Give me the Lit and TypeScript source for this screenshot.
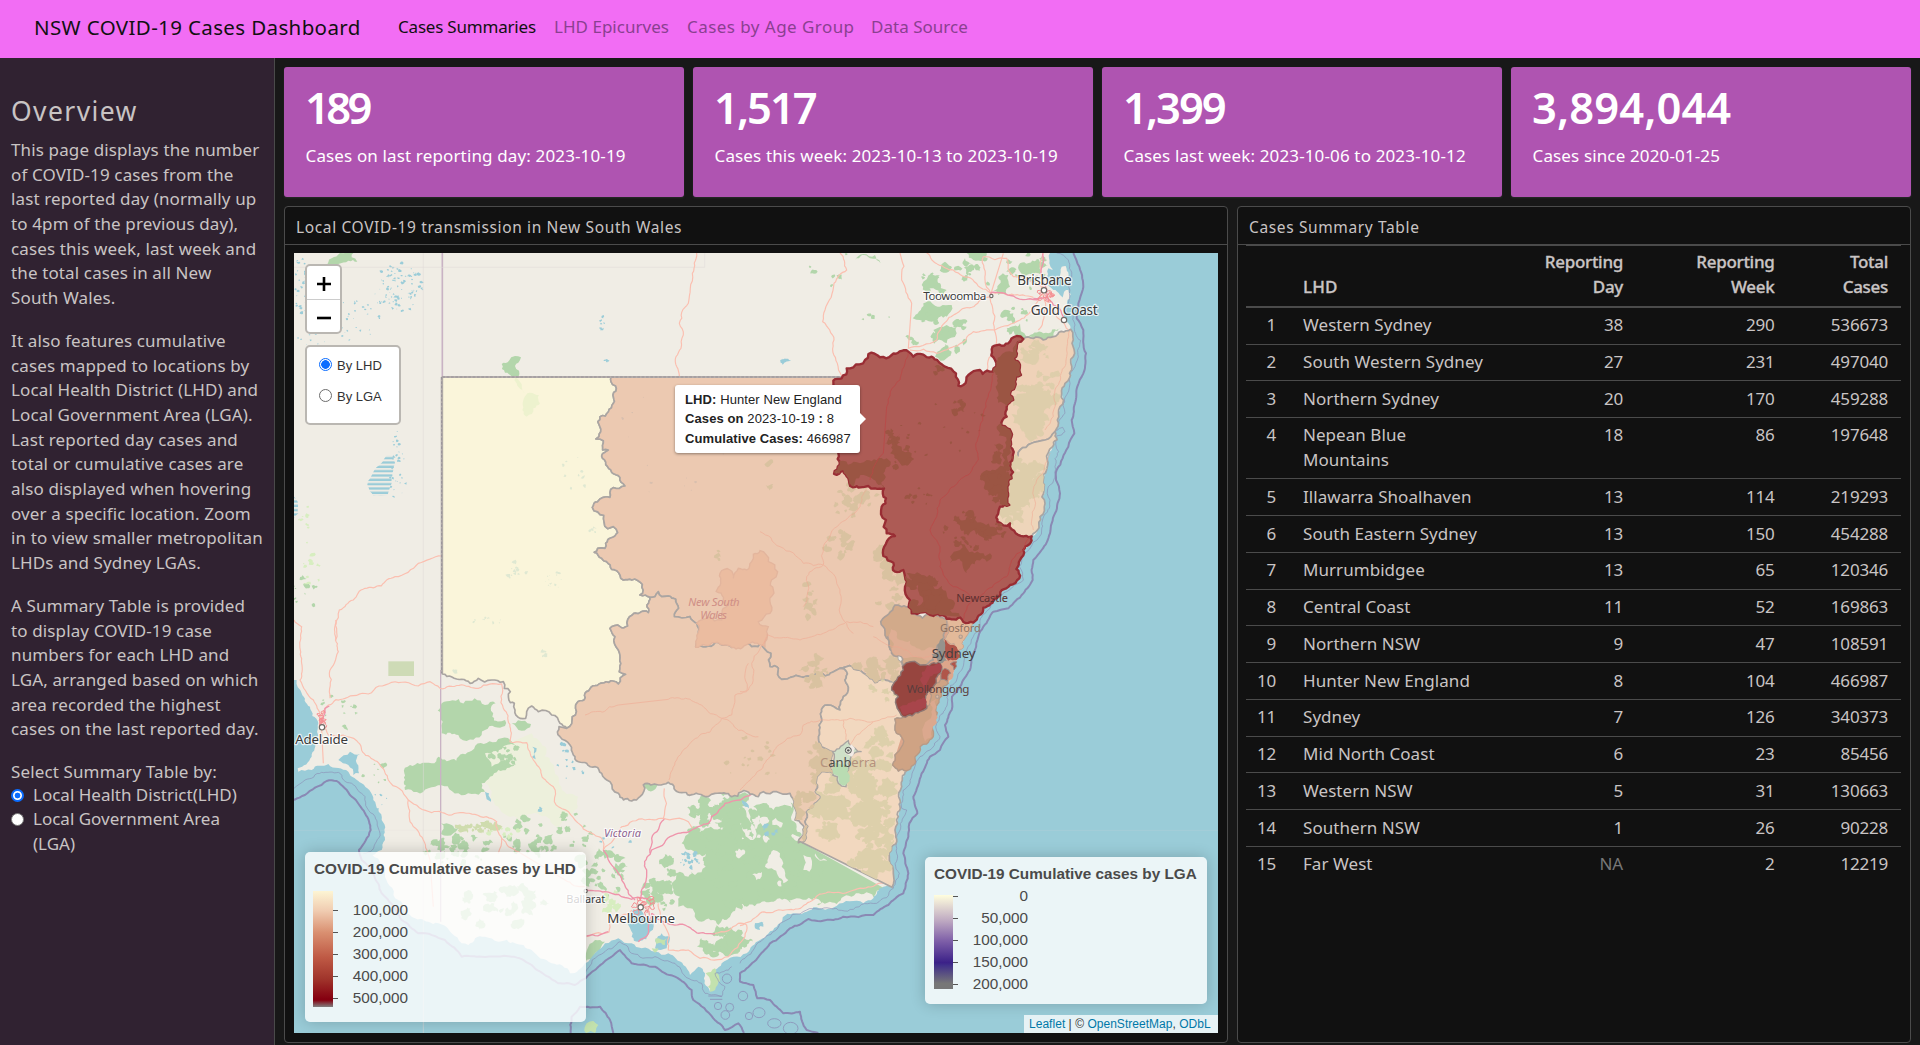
import { LitElement, html, svg, css } from "lit";
import { customElement, property } from "lit/decorators.js";

/* ---------- Map geometry helpers ---------- */
type Pt = [number, number];

const pts = (dx: number, dy: number, s: string): Pt[] =>
  s.trim().split(/\s+/).map((p) => {
    const [x, y] = p.split(",").map(Number);
    return [x + dx, y + dy] as Pt;
  });
// The map is drawn in four quadrants, each with its own origin.
const nw = (s: string) => pts(0, 0, s);
const ne = (s: string) => pts(1425, 0, s);
const sw = (s: string) => pts(0, 1140, s);
const se = (s: string) => pts(1365, 1140, s);

const noise = (a: number, b: number) => {
  const v = Math.sin(a * 12.9898 + b * 78.233) * 43758.5453;
  return v - Math.floor(v);
};

// Midpoint displacement; a border shared by two areas gets the same wiggle,
// and long survey lines stay straight.
function split(a: Pt, b: Pt, amp: number, min: number, out: Pt[]) {
  const len = Math.hypot(b[0] - a[0], b[1] - a[1]);
  if (len < min || len > 135) {
    out.push(b);
    return;
  }
  const flip = a[0] > b[0] || (a[0] === b[0] && a[1] > b[1]);
  const [p, q] = flip ? [b, a] : [a, b];
  const k = (noise(p[0] + q[0], p[1] + q[1]) - 0.5) * amp;
  const m: Pt = [(p[0] + q[0]) / 2 - (q[1] - p[1]) * k, (p[1] + q[1]) / 2 + (q[0] - p[0]) * k];
  split(a, m, amp, min, out);
  split(m, b, amp, min, out);
}
function path(points: Pt[], amp = 0.45, close = true, min = 12): string {
  const out: Pt[] = [points[0]];
  for (let i = 1; i < points.length; i++) split(points[i - 1], points[i], amp, min, out);
  if (close) split(points[points.length - 1], points[0], amp, min, out);
  return "M" + out.map((p) => p[0].toFixed(1) + " " + p[1].toFixed(1)).join("L") + (close ? "Z" : "");
}
const line = (p: Pt[], amp = 0.25) => path(p, amp, false);

// Scatter of small irregular blobs inside an ellipse.
function scatter(cx: number, cy: number, rx: number, ry: number, n: number, size: number, seed: number): string {
  let d = "";
  for (let i = 0; i < n; i++) {
    const t = noise(i, seed) * 6.283;
    const r = Math.sqrt(noise(seed, i + 7));
    const x = cx + Math.cos(t) * r * rx;
    const y = cy + Math.sin(t) * r * ry;
    const s = size * (0.3 + noise(i + 3, seed + 5));
    const p: Pt[] = [];
    for (let k = 0; k < 7; k++) {
      const q = s * (0.45 + noise(i + k, seed + k * 3));
      p.push([x + Math.cos(k * 0.9) * q, y + Math.sin(k * 0.9) * q * 0.85]);
    }
    d += path(p, 0.6, true, 8);
  }
  return d;
}

const northCoast = ne("932,268 936,310 940,350 935,390 915,430 905,460 900,500 892,540 885,575");
const midCoast = ne("885,575 878,620 862,660 850,720 852,750 855,790 840,830 815,889");
const hunterCoast = ne("815,889 790,930 780,960 778,1015 750,1035 710,1075 670,1103 640,1148");
const sydneyCoast = se("695,30 672,60 655,100 648,130 640,160 625,190 605,215 597,240 588,265 585,290 575,320 580,350 560,372 540,380 525,410 500,452");
const southCoast = se("500,452 485,500 480,540 475,590 465,630 455,680 448,720 460,760 456,802");
const bassCoast = [
  ...se("430,800 400,835 370,850 290,858 220,862 160,880 110,920 60,960 20,1000"),
  ...sw("1345,1010 1310,1030 1290,1050 1300,1090 1275,1115 1260,1060 1240,1040 1215,1065 1195,1035 1150,1000 1110,995 1070,985 1040,970 1000,955 960,970 930,1000 900,1030 855,1060 800,1030 740,990 690,970 640,965 600,950 570,955 550,975 530,970 500,940 460,910 430,905 380,890 340,840 300,770 262,705 290,690 300,660 290,600 265,540 230,490 190,455 130,432 80,450 40,455 38,445 80,410 95,360 100,310 75,260 50,220 35,180"),
];
const sea: Pt[] = [
  ...ne("870,39 868,70 880,90 862,110 880,140 900,165 915,190 910,220 925,250"),
  ...northCoast, ...midCoast, ...hunterCoast, ...sydneyCoast,
  ...southCoast, ...bassCoast,
];

const farWestEast: Pt[] = [
  ...nw("978,411 978,425 992,438 984,465 985,490 945,530 942,590 933,597 955,602 953,630 970,630 950,648 1020,738 985,743 975,758 975,772 955,772 922,802 968,866 985,860 998,878 962,910 960,925 938,925 928,937 950,955 965,965 980,988 995,992 1015,1020 1040,1020 1072,1033 1065,1065 1095,1072"),
];
const farWestSouth: Pt[] = [
  ...nw("1095,1072 1090,1118 1042,1125 1028,1158 1005,1160 975,1165"),
  ...sw("990,50 1000,90 1003,155 1022,163 1000,192 942,192 900,220 872,255 862,290 845,325"),
];
const farWest: Pt[] = [
  ...nw("472,411"), ...farWestEast, ...farWestSouth,
  ...sw("825,310 800,285 760,275 740,258 725,275 722,295 705,295 690,270 688,250 676,248 676,215 658,205 655,185 620,180 580,175 555,190 530,178 472,162"),
];
const westernSouth: Pt[] = [
  ...nw("1095,1072 1110,1070 1120,1055 1130,1070 1150,1068 1172,1078 1168,1130 1215,1130 1235,1150 1232,1220"),
  ...sw("1290,68 1340,82"),
  ...se("35,80 68,68 90,140 115,145 125,178 160,170 190,172 230,158 255,168 300,145"),
];
const southernTop = se("300,145 320,140 350,150 385,170 405,188 450,185 470,180");
const western: Pt[] = [
  ...farWestEast, ...westernSouth, ...southernTop,
  ...se("490,150 490,140 455,100 445,50"),
  ...ne("380,1190 450,1095 480,990 430,945 450,885 420,740 300,690 285,430 290,411"),
];
const murSouthern = se("300,145 320,155 315,180 325,210 300,270 262,255 245,275 238,330 245,380 278,395 278,460 245,455 228,490 242,535 222,560 195,605 200,635 188,668");
const murrumbidgee: Pt[] = [
  ...westernSouth, ...murSouthern,
  ...se("175,668 190,635 165,600 160,555 150,520 110,515 70,515 55,530 5,515"),
  ...sw("1340,530 1290,520 1270,530 1240,522 1190,518 1150,487 1120,495 1075,495 1065,530 1040,543 1000,520 975,485 950,460 905,430 865,405 855,375 825,350 822,320"),
  ...[...farWestSouth].reverse(),
];
const southern: Pt[] = [
  ...southernTop,
  ...se("455,210 475,230 472,265 490,290 465,297 470,340 488,375 465,405 458,435"),
  ...southCoast, ...[...murSouthern].reverse(),
];
const metro: Pt[] = [...se("600,20 620,0"), ...sydneyCoast, ...se("458,435 500,300 560,140")];
const illawarra = [...se("605,160 570,220 560,265 540,275 490,290 465,297 470,340 488,375 465,405 458,435"), ...[...sydneyCoast].reverse().slice(0, 11)];
const swSydney = se("515,125 550,135 575,130 600,125 605,155 580,200 555,240 560,265 540,275 490,290 472,265 475,230 455,210 470,180 490,150 487,140");
const nepean: Pt[] = [
  ...ne("450,1095 425,1100 405,1095 398,1110 375,1130 362,1145 375,1175 380,1195"),
  ...se("445,50 455,100 485,110 490,140 515,125 550,135 580,120 575,100 600,70 610,45 620,0"),
  ...ne("565,1140 520,1120 455,1120"),
];
const centralCoast: Pt[] = [...ne("565,1138 600,1132 615,1146 640,1148"), ...se("695,30 672,60 655,100 612,60 620,0")];
const northBorder = ne("932,268 880,290 850,300 790,297");
const hunterEastA = ne("790,297 770,325 762,355 780,375 783,405 768,410 765,440 750,465 760,480 740,530 725,557 742,565 750,620 758,655");
const hunterEastB = ne("758,655 750,680 755,715 742,740 748,795 720,800 712,845 750,850 755,868 815,889");
const coastSplit = ne("885,575 855,600 815,610 780,630 758,655");
const northern: Pt[] = [...northCoast, ...coastSplit, ...[...hunterEastA].reverse(), ...[...northBorder].reverse()];
const midNorth: Pt[] = [...midCoast, ...[...hunterEastB].reverse(), ...[...coastSplit].reverse()];
const hunter: Pt[] = [
  ...ne("220,422 245,415 260,385 325,342 395,345 445,335 460,350 515,350 555,380 588,400 595,437 610,435 625,405 660,390 668,402 698,395 705,360 695,328 745,310 770,288"),
  ...hunterEastA, ...hunterEastB, ...hunterCoast,
  ...ne("610,1146 600,1132 575,1138 520,1128 455,1120 450,1080 435,1040 435,1010 430,990 405,995 400,968 370,948 405,888 380,880 378,840 365,800 378,775 372,745 345,745 325,738 278,742 265,715 250,692 222,702 235,640 225,600"),
];

const forests: Pt[][] = [
  sw("470,250 600,255 632,250 618,272 622,290 660,300 660,318 600,330 590,345 520,345 470,340"),
  sw("358,460 375,435 405,432 440,430 460,410 560,392 690,375 650,388 600,400 620,440 660,420 690,432 640,450 615,470 590,490 600,515 560,522 520,520 450,500 430,505 360,510"),
  sw("468,610 500,615 520,625 505,640 468,642"),
  sw("680,310 720,302 738,312 710,332"),
  [...se("160,560 170,620 175,668 190,670 430,803 400,832 290,852 235,856 170,835 100,845 20,860 -20,850"),
   ...sw("1300,915 1250,905 1230,880 1180,860 1185,830 1160,790 1175,760 1210,770 1250,740 1265,700 1210,690 1190,670 1240,640 1320,620 1300,570 1330,540 1365,560 1380,640"),
   ...se("40,660 60,610 40,560 80,550 100,570")],
  sw("1300,960 1370,930 1380,960 1330,1010 1260,1000"),
  sw("900,1030 930,960 960,965 930,1000"),
  nw("118,76 140,55 165,39 205,39 200,52 217,65 190,62 160,72"),
  ne("485,135 515,100 540,105 535,130 560,150 550,165 500,155"),
  ne("458,235 490,190 540,200 575,195 560,230 515,245 480,240"),
  ne("520,270 560,255 590,280 560,310 530,300"), ne("525,350 545,325 575,335 560,355"),
  ne("620,39 680,39 670,62 640,60"), ne("780,70 830,60 850,110 790,120"),
  ne("715,110 745,105 750,140 715,165 700,150"), ne("730,210 760,220 765,250 740,240"),
  ne("285,60 310,42 345,45 362,70 330,55"), ne("740,265 780,250 800,290 850,280 905,265 880,290 850,300 790,297"),
  sw("1055,510 1110,495 1140,488 1090,512"),
];
const lakes: Pt[][] = [
  sw("160,420 195,395 225,402 215,430 222,460 205,465 190,435"),
  sw("1030,915 1045,868 1075,880 1085,905 1105,900 1095,935 1060,965 1040,950"),
  sw("1110,960 1130,940 1155,950 1145,985 1110,985"),
  sw("742,380 755,385 752,418 740,412"), sw("600,515 612,520 618,545 605,538"),
  sw("1370,540 1385,548 1392,565 1380,560"), sw("1410,910 1435,905 1425,930 1410,925"),
  ne("865,85 905,95 910,150 880,150 858,120"),
  se("45,910 65,905 70,920 48,925"),
];

const roads: Pt[][] = [
  nw("1235,39 1222,100 1210,190 1183,250 1195,285 1188,325 1173,350 1183,408"),
  nw("152,1200 163,1110 205,1080 240,1045 330,1010 400,970 470,948 550,922 640,900 760,865 820,855 845,888 960,882 985,855 1060,862 1200,848 1400,858 1500,920"),
  sw("152,0 160,95 133,160 135,235"), sw("27,0 50,20 50,130 45,180 85,240 108,290 115,430"),
  sw("110,310 130,255 180,235 250,222 320,187 400,198 435,185 465,205 580,205 650,192 655,265 675,365 725,368 745,420 805,500 808,545 870,600 950,655 955,690"),
  sw("110,315 130,345 215,362 285,435 310,480 370,540 440,578 500,585 570,583 635,605 650,655 700,695 840,780 900,800"),
  sw("370,540 375,605 415,660 435,720 445,860"), sw("650,655 640,700"),
  sw("1138,505 1135,595 1080,600 1010,620 955,690"), sw("1135,595 1210,605 1222,625"),
  sw("905,950 940,938 972,936 975,905 1040,870"), sw("1120,850 1150,940 1150,990 1210,990 1245,1015 1330,1010 1380,950 1385,915 1360,910 1290,940"),
  se("0,917 60,880 160,870 210,845 300,818 370,805 430,790"),
  ne("240,39 260,90 222,130 195,210 188,245 222,300 232,370 245,408"),
  ne("420,39 425,120 455,190 445,325"), ne("500,39 580,90 690,158 820,172"),
  ne("445,325 530,300 590,220 690,170 730,40"), ne("450,330 530,340 640,275 705,270 780,240 850,160"),
  ne("690,165 700,250 705,330 680,400"), ne("850,39 850,170 835,270"), ne("670,50 740,55 760,110 850,140"),
  ne("850,170 880,210 915,255 925,270"), ne("670,50 675,120 692,160"),
];
const motorways: Pt[][] = [
  sw("1440,480 1365,540 1320,550 1280,590 1270,610 1220,630 1100,690 1080,790 1065,840"),
  sw("1138,598 1100,655 1095,700"), sw("955,690 1000,760 1050,840"), sw("905,810 960,815 1040,838 1090,838"),
  sw("1100,880 1140,908 1200,915 1290,942"), sw("1060,965 1090,940 1100,880"), sw("905,948 970,935"),
  ne("820,175 860,170 880,195 915,240"), ne("848,40 848,120 860,180"), sw("108,310 115,290 120,265 133,258"),
  ne("690,160 760,168 840,175"),
];
const innerRoads: Pt[][] = [
  sw("900,285 1000,255 1150,238 1250,255 1310,295 1420,350"), sw("1390,130 1385,215 1350,225 1340,285 1310,295 1225,360 1175,420 1152,480"),
  se("0,215 25,210 35,130 80,50"), se("0,510 40,470 80,420 110,380 180,345 190,315 240,300 310,300 330,295 400,305 470,285"),
  se("330,375 370,330 400,305"), se("400,50 470,80 520,110 580,105"), se("80,45 180,60 250,40 320,5 400,20"), se("310,300 318,360"),
  ne("0,875 60,920 130,970 190,975 235,1040 240,1120 280,1180"), ne("190,975 190,920 240,850 300,800 320,745"), ne("190,975 140,1010 130,1100"),
  ne("930,270 920,350 885,450 880,530 855,570"), ne("870,640 830,720 825,800 820,870"),
];
const hunterRoads: Pt[][] = [
  ne("445,340 420,420 380,500 370,640 330,720"), ne("700,400 680,480 660,560 655,660 580,740 540,780 530,830 510,870 540,920 540,980 580,1040 640,1080"),
  ne("810,890 755,960 740,1010 680,1050 640,1080 610,1140"),
];
const boundary12: Pt[][] = [
  [...ne("940,39 958,80 968,150 955,190 950,235 970,270 978,340 970,400 952,440 945,490 935,540 943,580 925,620 890,690 888,720 900,760 885,820 870,880 845,930 820,960 818,1020 790,1060 745,1105 700,1115 670,1160"),
   ...se("715,50 705,90 690,150 660,200 636,230 635,270 615,315 625,350 600,390 570,410 545,460 520,530 532,580 508,610 505,650 490,700 505,760 490,820 445,855 400,885 310,890 280,900 205,897 150,925 90,970 0,1060 0,1085 40,1095 52,1135 90,1140 130,1180 180,1175 200,1230 235,1239")],
  sw("27,540 60,525 125,483 155,483 200,530 240,580 257,630 222,690 230,720 290,820 350,900 400,940 480,960 530,1010 590,1010 680,1010 740,1035 820,1090 870,1095 930,1050 1005,990 1040,1030 1110,1040 1170,1070 1220,1110 1225,1140 1285,1195 1320,1230 1360,1210 1377,1239"),
  sw("857,1239 860,1190 885,1160 945,1160 975,1200 985,1239"),
];
const boundary3: Pt[][] = [
  [...ne("890,39 925,60 935,110 925,190 945,255 955,350 930,430 915,520 890,572 908,562 915,575 905,585 885,590 885,680 865,740 870,780 845,870 790,940 790,1020 740,1055 690,1105 660,1150"),
   ...se("700,50 680,90 665,150 650,180 625,220 615,270 590,310 600,350 570,390 540,410 515,470 490,510 485,565 500,570 495,585 475,640 470,700 478,760 460,805 410,850 340,868 270,865 200,870 120,910 40,990 0,1030")],
  sw("27,505 60,480 110,457 160,457 200,490 240,530 270,590 285,640 262,690 235,700"),
  sw("900,1060 960,995 1005,965 1040,1000 1110,1010 1170,1030 1220,1080 1250,1090 1260,1120 1310,1130 1320,1100 1290,1060 1340,1040"),
];

const places: { x: number; y: number; w: number; size: number; name: string; dot?: Pt; r?: number; fill?: string; halo?: boolean }[] = [
  { name: "Brisbane", x: 2197, y: 135, w: 163, size: 41, dot: [2277, 151], r: 8 },
  { name: "Toowoomba", x: 1915, y: 180, w: 189, size: 35, dot: [2119, 168], r: 5 },
  { name: "Gold Coast", x: 2237, y: 226, w: 201, size: 41, dot: [2337, 240], r: 8 },
  { name: "Newcastle", x: 2014, y: 1087, w: 155, size: 33, fill: "#5c3030", halo: false },
  { name: "Gosford", x: 1965, y: 1177, w: 122, size: 33, fill: "#8d7161", halo: false, dot: [2027, 1190], r: 5 },
  { name: "Sydney", x: 1940, y: 1254, w: 132, size: 40, fill: "#474040", halo: false },
  { name: "Wollongong", x: 1865, y: 1358, w: 188, size: 35, fill: "#5b3d3d", halo: false, dot: [1957, 1370], r: 5 },
  { name: "Adelaide", x: 31, y: 1511, w: 158, size: 40, dot: [111, 1462], r: 8 },
  { name: "Melbourne", x: 967, y: 2048, w: 203, size: 40, dot: [1067, 2002], r: 8 },
  { name: "Ballarat", x: 844, y: 1990, w: 117, size: 33, dot: [902, 1953], r: 5 },
];

@customElement("nsw-map")
class NswMap extends LitElement {
  static styles = css`
    :host { display: block; position: relative; height: 780px; overflow: hidden; font-family: "Liberation Sans", Arial, sans-serif; color: #333; }
    .canvas { display: block; width: 100%; height: 100%; }
    .label { font-family: "Noto Sans", sans-serif; }
    .halo { paint-order: stroke; stroke: #fff; stroke-opacity: 0.75; stroke-width: 7px; stroke-linejoin: round; }
    .italic { font-style: italic; }
    .control { position: absolute; left: 11px; box-sizing: border-box; border: 2px solid #bab7b2; border-radius: 5px; background: #fff; }
    .zoom { top: 11px; width: 37px; height: 70px; display: flex; flex-direction: column; }
    .btn { flex: 1; display: flex; align-items: center; justify-content: center; padding-top: 4px; }
    .btn + .btn { border-top: 1px solid #ccc; }
    .layers { top: 92px; width: 96px; height: 80px; padding: 9px 12px; display: flex; flex-direction: column; gap: 12px; }
    .choice { display: flex; align-items: center; gap: 5px; font-size: 13px; line-height: 19px; height: 19px; white-space: nowrap; }
    .choice input { appearance: none; box-sizing: border-box; width: 13px; height: 13px; margin: 0 0 3px; border: 1px solid #6c6c6c; border-radius: 50%; background: #fff; }
    .choice input:checked { border-color: #0a6cff; background: radial-gradient(circle, #0a6cff 0 4px, #fff 4.6px); }
    .tooltip { position: absolute; left: 381px; top: 132px; width: 185px; height: 68px; box-sizing: border-box; padding: 4.5px 0 0 10px; background: #fff; border-radius: 3px; box-shadow: 0 1px 3px rgba(0, 0, 0, 0.4); font-size: 13px; line-height: 19.5px; letter-spacing: 0.1px; color: #222; white-space: nowrap; }
    .tooltip::after { content: ""; position: absolute; left: 185px; top: 28px; border: 6px solid transparent; border-left-color: #fff; border-right: 0; }
    .legend { position: absolute; box-sizing: border-box; border-radius: 5px; background: rgba(255, 255, 255, 0.8); box-shadow: 0 0 15px rgba(0, 0, 0, 0.2); color: #4a4a4a; padding: 7px 8px; }
    .lhd { left: 11px; top: 599px; width: 281px; height: 170px; }
    .lga { left: 631px; top: 604px; width: 282px; height: 147px; padding-left: 9px; }
    .legend-title { font-weight: 700; font-size: 15.3px; line-height: 20px; white-space: nowrap; padding-left: 1px; }
    .lga .legend-title { padding-left: 0; }
    .scale { display: flex; }
    .lhd .scale { margin-top: 12px; }
    .lga .scale { margin-top: 4px; }
    .bar { width: 20px; height: 116px; background: linear-gradient(#fdf5d4, #f0ccb1 17%, #d98f70 36%, #bf5a45 57%, #a0342b 76%, #850010 93%, #850010 94%, #808080 100%); }
    .lga .bar { width: 19px; height: 94px; margin-top: 7px; background: linear-gradient(#fffede, #bfaac2 27%, #7e5fa8 49%, #3b2188 72%, #41308a 75%, #777 94%, #777); }
    .ticks { display: flex; flex-direction: column; }
    .tick { display: flex; align-items: center; height: 22px; font-size: 15.3px; }
    .lhd .ticks { padding-top: 8px; }
    .lga .ticks { margin-top: -3px; }
    .dash { width: 5px; height: 1px; background: #555; }
    .num { width: 70px; text-align: right; }
    .attribution { position: absolute; right: 0; bottom: 0; width: 194px; height: 18px; box-sizing: border-box; padding-left: 5px; background: rgba(255, 255, 255, 0.75); font-size: 12px; line-height: 18px; white-space: nowrap; color: #333; letter-spacing: 0.03px; }
    .attribution a { color: #0078a8; }
  `;

  private area(p: Pt[], fill: string, stroke = "#aaa5a2", width = 5) {
    return svg`<path d=${path(p)} fill=${fill} stroke=${stroke} stroke-width=${width} stroke-linejoin="round"></path>`;
  }

  private renderMap() {
    return svg`
      <defs>
        <clipPath id="hunter-clip"><path d=${path(hunter)}></path></clipPath>
        <clipPath id="mid-clip"><path d=${path(midNorth)}></path><path d=${path(northern)}></path></clipPath>
        <clipPath id="south-clip"><path d=${path(southern)}></path></clipPath>
        <clipPath id="west-clip"><path d=${path(western)}></path><path d=${path(murrumbidgee)}></path></clipPath>
        <pattern id="ephemeral" width="14" height="13" patternUnits="userSpaceOnUse"><rect y="1" width="14" height="7" fill="#9accd8"></rect></pattern>
      </defs>
      <rect x="27" y="39" width="2772" height="2340" fill="#f0ede5"></rect>

      <path d=${path(sw("600,400 740,340 800,430 880,530 820,620 700,600 640,560 600,490"))} fill="#edf0dc"></path>
      <rect x="310" y="1264" width="77" height="44" fill="#cedbb6"></rect>
      <path d=${scatter(575, 1762, 60, 14, 24, 11, 71)} fill="#cfdcae"></path>
      ${forests.map((f) => svg`<path d=${path(f, 0.55)} fill="#b3d6ab"></path>`)}
      <path d=${scatter(660, 1545, 40, 40, 20, 10, 3) + scatter(520, 1830, 100, 45, 30, 14, 9) + scatter(740, 1790, 90, 60, 28, 12, 13) + scatter(870, 1770, 50, 60, 16, 12, 15) + scatter(950, 1900, 70, 80, 30, 14, 4) + scatter(1130, 1940, 50, 80, 22, 16, 22) + scatter(1320, 1750, 100, 90, 60, 18, 31) + scatter(1320, 2110, 70, 40, 18, 16, 6) + scatter(1430, 1900, 170, 120, 60, 22, 8) + scatter(160, 1420, 60, 60, 12, 8, 17) + scatter(270, 1600, 40, 40, 9, 8, 19) + scatter(60, 1065, 40, 60, 10, 7, 21) + scatter(650, 2000, 130, 60, 20, 20, 23)} fill="#b3d6ab"></path>
      <path d=${scatter(1960, 270, 90, 80, 20, 11, 41) + scatter(2090, 90, 120, 45, 14, 12, 42) + scatter(2230, 90, 50, 60, 12, 12, 43) + scatter(1950, 120, 40, 40, 8, 8, 44) + scatter(1660, 90, 100, 50, 6, 8, 45) + scatter(1770, 230, 50, 12, 5, 10, 47) + scatter(2190, 240, 60, 40, 8, 12, 48)} fill="#b3d6ab"></path>
      <path d=${scatter(1480, 1830, 120, 110, 10, 12, 51) + path(se("5,560 20,590 40,660 30,600 22,560")) + path(se("85,520 150,530 155,565 110,560 80,545")) + path(se("100,690 120,700 125,740 145,780 130,790 95,745 75,740")) + path(se("190,705 212,712 208,755 190,750")) + path(se("225,700 262,722 240,722")) + path(se("0,870 60,850 160,860 220,835 245,850 210,862 120,880 40,930 0,930")) + path(sw("1205,700 1240,710 1262,740 1230,765 1205,745"))} fill="#f0ede5"></path>
      <path d=${scatter(80, 1000, 30, 60, 12, 6, 61) + scatter(60, 860, 20, 70, 10, 6, 62) + scatter(660, 1780, 60, 14, 8, 8, 63) + scatter(980, 1985, 30, 30, 8, 12, 64)} fill="#d7eec0"></path>

      <path d=${path([...sea, [27, 1320], [27, 2379], [2799, 2379], [2799, 39]], 0.35)} fill="#9accd8"></path>
      ${lakes.map((l) => svg`<path d=${path(l)} fill="#9accd8"></path>`)}
      <path d=${scatter(340, 140, 75, 75, 90, 4, 81) + scatter(230, 230, 90, 60, 26, 3, 82) + scatter(50, 140, 22, 100, 30, 4, 83) + scatter(110, 300, 90, 30, 14, 3, 84) + scatter(340, 700, 25, 90, 24, 3.5, 85) + scatter(335, 620, 12, 50, 12, 4, 86) + scatter(955, 245, 12, 24, 8, 4, 87) + scatter(1215, 1860, 30, 25, 20, 6, 90) + scatter(860, 1560, 50, 60, 16, 5, 89) + scatter(240, 1690, 70, 40, 6, 5, 91) + scatter(1455, 1770, 20, 20, 6, 8, 92) + scatter(1000, 1800, 60, 30, 6, 5, 93) + scatter(960, 362, 10, 6, 4, 6, 94) + scatter(768, 1710, 6, 8, 3, 7, 95) + scatter(1500, 360, 8, 6, 3, 8, 96)} fill="#9accd8"></path>
      <path d=${path(nw("305,646 325,648 330,668 322,700 320,730 308,765 265,768 247,735 258,710 272,685"), 0.2)} fill="url(#ephemeral)"></path>
      <path d=${path(nw("27,770 38,785 40,820 27,835"), 0.2)} fill="url(#ephemeral)"></path>
      <path d=${path(nw("650,372 672,362 690,348 708,352 700,368 690,378 700,411 682,411 660,398"))} fill="#b3d6ab"></path>
      <path d=${path(ne("905,80 917,78 912,130 905,115")) + path(ne("918,150 925,150 918,200 905,205"))} fill="#f0ede5"></path>
      <path d=${path(sw("1262,1060 1290,1045 1298,1095 1275,1115")) + path(sw("905,1210 925,1203 940,1215 930,1239 903,1239")) + path(sw("1100,985 1120,985 1110,998")) + path(sw("1112,955 1145,955 1140,975 1115,972"))} fill="#c3e2ae"></path>

      <g fill="none" stroke="#c9b3c4">
        <path d="M472 39V411" stroke-width="5"></path>
        <path d="M467 1290V2045" stroke-width="4"></path>
      </g>
      <g fill="none" stroke="#dedbd9" stroke-width="2">
        <path d="M415 39V2379M1259 39V82M27 82H1259" opacity="0.8"></path>
        <path d="M27 1771H470M1850 1771H2799" opacity="0.25"></path>
      </g>
      <g fill="none" stroke="#fbbfb0" stroke-width="3.5">${roads.map((r) => svg`<path d=${line(r)}></path>`)}</g>
      <g fill="none" stroke="#ef94ab" stroke-width="4">${motorways.map((r) => svg`<path d=${line(r)}></path>`)}</g>
      <path d=${scatter(1075, 1995, 35, 28, 14, 9, 101) + scatter(108, 1440, 12, 28, 8, 8, 102) + scatter(2285, 170, 30, 22, 10, 7, 103)} fill="none" stroke="#f58f92" stroke-width="3"></path>

      <g fill="none" stroke="#8a89b4" stroke-linejoin="round">
        ${boundary12.map((b) => svg`<path d=${line(b, 0.15)} stroke-width="6"></path>`)}
        ${boundary3.map((b) => svg`<path d=${line(b, 0.3)} stroke-width="2.5" opacity="0.7"></path>`)}
        <g stroke-width="3" opacity="0.7">
          <circle cx="1326" cy="2216" r="14"></circle><circle cx="1374" cy="2268" r="14"></circle><circle cx="1299" cy="2298" r="11"></circle>
          <circle cx="1334" cy="2302" r="12"></circle><circle cx="1321" cy="2325" r="13"></circle><circle cx="1392" cy="2328" r="11"></circle>
          <ellipse cx="1422" cy="2318" rx="18" ry="15"></ellipse><ellipse cx="1468" cy="2350" rx="20" ry="14"></ellipse>
          <ellipse cx="1517" cy="2365" rx="22" ry="18"></ellipse><path d="M1270 2268H1310M1275 2278H1312"></path>
        </g>
      </g>

      ${this.area(farWest, "#faf5da")}
      ${this.area(western, "#ecc9b1")}
      ${this.area(murrumbidgee, "#eccbb3")}
      ${this.area(southern, "#f2d8bf")}
      <g clip-path="url(#west-clip)">
        <path d=${path(nw("1305,1000 1335,990 1345,1015 1360,985 1385,990 1400,965 1425,932 1450,965 1478,995 1465,1050 1455,1120 1420,1145 1450,1160 1440,1220 1340,1222 1290,1208 1232,1222 1235,1150 1310,1140 1325,1100"))} fill="#ebbca0" stroke="#e3b59d" stroke-width="4"></path>
        <path d=${scatter(1710, 780, 70, 60, 22, 16, 111) + scatter(1660, 920, 40, 50, 12, 14, 112) + scatter(1455, 700, 8, 50, 6, 9, 113) + scatter(1825, 970, 50, 60, 26, 20, 114) + scatter(1810, 1080, 40, 50, 14, 12, 118) + scatter(1575, 1080, 16, 60, 10, 10, 115) + scatter(1590, 1290, 40, 50, 20, 14, 116) + scatter(1610, 1570, 45, 60, 34, 20, 117) + scatter(1560, 1720, 40, 70, 26, 16, 119) + scatter(1400, 1560, 90, 90, 18, 7, 120) + scatter(1300, 945, 14, 18, 5, 8, 121) + scatter(1790, 1290, 80, 40, 24, 18, 122)} fill="#d9c2a0"></path>
        <path d=${scatter(1150, 600, 170, 180, 16, 4, 123)} fill="#d8bfae"></path>
      </g>
      <g clip-path="url(#south-clip)">
        <path d=${scatter(1700, 1660, 70, 90, 36, 22, 131) + scatter(1775, 1740, 50, 200, 50, 22, 132) + scatter(1620, 1720, 50, 60, 22, 22, 133) + scatter(1760, 1890, 60, 60, 24, 22, 134) + scatter(1800, 1350, 40, 60, 12, 12, 135) + scatter(1780, 1520, 40, 60, 16, 14, 136)} fill="#ddd0ab"></path>
      </g>
      <path d=${path(nw("690,411 705,425 720,460 712,450 695,430")) + path(nw("715,480 735,458 762,465 765,490 745,505 725,530 712,510"))} fill="#edf2ce"></path>
      <path d=${scatter(870, 700, 40, 60, 10, 5, 141) + scatter(690, 990, 40, 25, 14, 6, 142) + scatter(810, 1020, 30, 25, 14, 4, 143) + scatter(610, 1140, 50, 15, 10, 4, 144) + scatter(780, 1240, 12, 10, 5, 6, 145) + scatter(510, 1290, 12, 6, 3, 8, 146) + scatter(925, 870, 14, 8, 5, 5, 147)} fill="#dfe8d2"></path>
      <path d="M470 411V1300M472 411H1665" fill="none" stroke="#b5aeab" stroke-width="6"></path>
      <path d="M470 411V1300M472 411H1665" fill="none" stroke="#97929a" stroke-width="3" stroke-dasharray="8 5"></path>
      <path d=${path(se("278,395 325,362 345,385 365,395 340,402 325,430 322,480 318,500 295,490 292,470 278,465"))} fill="#cfe0c8" stroke="#a9a5a2" stroke-width="4"></path>
      <path d=${path(se("330,365 345,385 335,410 315,400"))} fill="#f2ebe6"></path>
      <path d=${path(se("282,430 322,440 318,495 297,487 294,468 280,462"))} fill="#b9dcb2"></path>
      ${this.area(northern, "#efd2b8")}
      ${this.area(midNorth, "#eed5ba")}
      <g clip-path="url(#mid-clip)" fill="#deceab">
        <path d=${scatter(2245, 500, 45, 90, 40, 24, 151) + scatter(2250, 340, 40, 30, 16, 16, 152) + scatter(2215, 720, 60, 70, 60, 22, 153) + scatter(2290, 440, 40, 50, 12, 14, 154) + scatter(2180, 810, 30, 40, 16, 16, 155)}></path>
      </g>
      <path d=${path(metro)} fill="#dda68b"></path>
      ${this.area(illawarra, "#cfa384", "#b79a86", 4)}
      <path d=${path(se("590,230 590,260 578,320 575,350 555,365 548,340 565,300 570,250"))} fill="#dba88e"></path>
      ${this.area(nepean, "#d2aa8a", "#ab9f98", 5)}
      <path d=${path(se("445,50 460,100 490,115 575,118 590,90 530,85 480,60 450,20"))} fill="#dfae94"></path>
      ${this.area(centralCoast, "#e3b999", "#c2a796", 3)}
      ${this.area(swSydney, "#97453f", "#8f7672", 4)}
      <path d=${path(se("560,135 600,130 602,155 560,225 545,215 540,180"))} fill="#a8454b"></path>
      <path d=${path(se("478,262 500,255 550,232 558,262 540,272 490,285"))} fill="#a8454b"></path>
      <path d=${path(se("612,56 640,75 657,92 650,120 625,122 612,110"))} fill="#b0564a"></path>
      <path d=${path(se("610,45 616,75 614,110 628,125 600,130 590,115 575,103 595,92 600,60"))} fill="#95938d"></path>
      <path d=${path(se("603,160 615,145 632,160 622,183 603,178")) + path(se("630,132 650,125 642,150"))} fill="#b0564a" stroke="#a08c86" stroke-width="3"></path>
      <g fill="none" stroke="#f2a58f" stroke-width="3" opacity="0.5">${innerRoads.map((r) => svg`<path d=${line(r)}></path>`)}</g>

      ${this.area(hunter, "#ad5b55", "#992d34", 7)}
      <g clip-path="url(#hunter-clip)" fill="#9b5543">
        <path d=${path(ne("440,1000 500,1010 520,1040 560,1060 570,1110 600,1130 455,1118"), 0.7)}></path>
        <path d=${path(ne("700,365 720,350 780,300 790,400 770,460 750,530 760,620 760,720 750,795 720,780 690,760 665,720 680,690 735,660 740,600 710,560 730,490 720,400 698,395"), 0.7)}></path>
        <path d=${path(ne("230,660 300,670 320,660 380,655 370,700 372,745 280,740 250,690 222,700"), 0.7)}></path>
        <path d=${path(ne("395,590 420,580 425,620 455,640 450,670 420,670 390,640"), 0.7)}></path>
        <path d=${path(ne("570,950 600,930 620,905 660,940 690,940 680,965 650,960 620,1000 570,970"), 0.8)}></path>
        <path d=${path(ne("590,850 620,830 670,850 700,860 740,875 730,895 690,890 650,870"), 0.8)}></path>
        <path d=${scatter(2060, 870, 90, 60, 20, 10, 161) + scatter(1840, 620, 40, 70, 16, 9, 162) + scatter(2140, 690, 60, 90, 20, 13, 163) + scatter(1960, 375, 30, 25, 8, 12, 164) + scatter(2020, 500, 16, 20, 5, 10, 165) + scatter(1900, 770, 40, 30, 10, 8, 166) + scatter(1900, 1060, 70, 60, 18, 18, 167) + scatter(2000, 600, 130, 120, 14, 5, 168)}></path>
      </g>
      <g fill="none" stroke="#bd4646" stroke-width="3" opacity="0.7">${hunterRoads.map((r) => svg`<path d=${line(r)}></path>`)}</g>

      ${places.map((p) => svg`
        ${p.dot ? svg`<circle cx=${p.dot[0]} cy=${p.dot[1]} r=${p.r} fill=${p.fill ? "#dcb9a4" : "#fff"} stroke=${p.fill ? "#b09c8e" : "#6f6a66"} stroke-width="3.5"></circle>` : null}
        <text class=${"label" + (p.halo === false ? "" : " halo")} x=${p.x} y=${p.y} font-size=${p.size} textLength=${p.w} fill=${p.fill ?? "#3b3b3b"}>${p.name}</text>`)}
      <circle cx="1690" cy="1531" r="9" fill="#dfe5da" stroke="#555" stroke-width="3"></circle>
      <circle cx="1690" cy="1531" r="3.5" fill="#555"></circle>
      <text class="label" x="1605" y="1581" font-size="39" textLength="169" fill="#b4927d">C<tspan fill="#4f504b">anb</tspan>erra</text>
      <text class="label italic" x="1210" y="1098" font-size="34" textLength="154" fill="#cf8f86">New South</text>
      <text class="label italic" x="1246" y="1138" font-size="34" textLength="80" fill="#cf8f86">Wales</text>
      <text class="label italic halo" x="957" y="1790" font-size="33" textLength="111" fill="#8c6391">Victoria</text>
    `;
  }

  private legend(kind: string, title: string, values: string[]) {
    return html`<div class="legend ${kind}">
      <div class="legend-title">${title}</div>
      <div class="scale">
        <div class="bar"></div>
        <div class="ticks">${values.map((v) => html`<div class="tick"><span class="dash"></span><span class="num">${v}</span></div>`)}</div>
      </div>
    </div>`;
  }

  render() {
    return html`
      <svg class="canvas" viewBox="27 39 2772 2340" preserveAspectRatio="none">${this.renderMap()}</svg>
      <div class="control zoom">
        <div class="btn"><svg width="14" height="14" viewBox="0 0 14 14"><path d="M7 0V14M0 7H14" stroke="#000" stroke-width="2.6"></path></svg></div>
        <div class="btn"><svg width="14" height="14" viewBox="0 0 14 14"><path d="M0 7H14" stroke="#000" stroke-width="2.6"></path></svg></div>
      </div>
      <div class="control layers">
        <label class="choice"><input type="radio" name="layer" checked />By LHD</label>
        <label class="choice"><input type="radio" name="layer" />By LGA</label>
      </div>
      <div class="tooltip">
        <div><b>LHD:</b> Hunter New England</div>
        <div><b>Cases on</b> 2023-10-19 <b>:</b> 8</div>
        <div><b>Cumulative Cases:</b> 466987</div>
      </div>
      ${this.legend("lhd", "COVID-19 Cumulative cases by LHD", ["100,000", "200,000", "300,000", "400,000", "500,000"])}
      ${this.legend("lga", "COVID-19 Cumulative cases by LGA", ["0", "50,000", "100,000", "150,000", "200,000"])}
      <div class="attribution"><a>Leaflet</a> | © <a>OpenStreetMap</a>, <a>ODbL</a></div>
    `;
  }
}

@customElement("value-box")
class ValueBox extends LitElement {
  @property() value = "";
  @property() caption = "";
  static styles = css`
    :host { display: block; box-sizing: border-box; height: 130px; padding: 15px 21px; background: #af54b1; border-radius: 3px; color: #fff; box-shadow: 0 1px 2px #2b2b2b; }
    .value { font-weight: 600; font-size: 43.5px; line-height: 50px; letter-spacing: 0.1px; }
    .value.short { letter-spacing: -3.6px; }
    .value.four { letter-spacing: -2px; }
    .caption { margin-top: 10.5px; padding-left: 0.5px; font-size: 17px; line-height: 25px; letter-spacing: 0.14px; white-space: nowrap; }
  `;
  render() {
    const cls = this.value.length < 4 ? "short" : this.value.length < 6 ? "four" : "";
    return html`<div class="value ${cls}">${this.value}</div><div class="caption">${this.caption}</div>`;
  }
}

const rows: [string, string, string, string][] = [
  ["Western Sydney", "38", "290", "536673"],
  ["South Western Sydney", "27", "231", "497040"],
  ["Northern Sydney", "20", "170", "459288"],
  ["Nepean Blue Mountains", "18", "86", "197648"],
  ["Illawarra Shoalhaven", "13", "114", "219293"],
  ["South Eastern Sydney", "13", "150", "454288"],
  ["Murrumbidgee", "13", "65", "120346"],
  ["Central Coast", "11", "52", "169863"],
  ["Northern NSW", "9", "47", "108591"],
  ["Hunter New England", "8", "104", "466987"],
  ["Sydney", "7", "126", "340373"],
  ["Mid North Coast", "6", "23", "85456"],
  ["Western NSW", "5", "31", "130663"],
  ["Southern NSW", "1", "26", "90228"],
  ["Far West", "NA", "2", "12219"],
];

@customElement("app-root")
class AppRoot extends LitElement {
  static styles = css`
    :host { display: flex; flex-direction: column; height: 1045px; overflow: hidden; background: #181818; color: #c9c4c4; font-family: "Noto Sans", sans-serif; font-size: 17px; }
    .top { flex: none; display: flex; align-items: center; height: 58px; box-sizing: border-box; padding: 0 0 5px 34px; background: #f26df4; color: #111; white-space: nowrap; }
    .brand { font-size: 20.5px; width: 364px; letter-spacing: 0.37px; }
    .nav { width: 156px; color: #8a4090; letter-spacing: 0.02px; }
    .nav.active { color: #111; letter-spacing: -0.2px; }
    .nav.group { width: 184px; letter-spacing: 0.45px; }
    .nav.epi { width: 133px; }
    .body { flex: 1; display: flex; min-height: 0; }
    .side { flex: none; width: 275px; box-sizing: border-box; border-right: 1px solid #4a4a4a; background: #302231; padding: 38px 0 0 11px; line-height: 24.65px; white-space: nowrap; letter-spacing: 0.13px; }
    h2 { margin: 0 0 11px; font-weight: 400; font-size: 26.5px; line-height: 31px; letter-spacing: 1.4px; }
    p { margin: 0 0 18.4px; }
    .select { height: 22.5px; }
    .opt { display: flex; gap: 9px; letter-spacing: 0; }
    .opt input { appearance: none; flex: none; box-sizing: border-box; width: 13px; height: 13px; margin: 6px 0 0; border: 1px solid #777; border-radius: 50%; background: #fff; }
    .opt input:checked { border: 2px solid #0a6cff; background: radial-gradient(circle, #0a6cff 0 2.6px, #fff 3.2px); }
    .main { flex: 1; min-width: 0; padding: 9px; display: flex; flex-direction: column; gap: 9px; }
    .boxes { display: grid; grid-template-columns: repeat(4, 1fr); gap: 9px; }
    .panels { display: grid; grid-template-columns: 944px 1fr; gap: 9px; }
    .card { box-sizing: border-box; height: 837px; border: 1px solid #4b4b4b; border-radius: 4px; background: #111; }
    .head { height: 38px; box-sizing: border-box; border-bottom: 1px solid #4b4b4b; padding: 3px 0 0 11px; font-size: 15.5px; line-height: 34px; letter-spacing: 0.63px; white-space: nowrap; }
    .map-pad { padding: 8px 9px; }
    .table { margin: 0 9px 0 8px; border-top: 1px solid #4b4b4b; line-height: 24.65px; }
    .row { display: grid; grid-template-columns: 30px 27px 187px 133px 151.5px 113.5px; padding: 5.3px 0 5.8px; border-bottom: 1px solid #4b4b4b; text-align: right; letter-spacing: -0.2px; }
    .row:last-child { border: 0; }
    .row.header { border-bottom-width: 2px; padding: 4px 0 6.5px; font-weight: 500; align-items: end; letter-spacing: -0.3px; -webkit-text-stroke: 0.3px; }
    .name { grid-column: 3; text-align: left; letter-spacing: 0.05px; }
    .na { color: #777; }
  `;

  render() {
    return html`
      <header class="top">
        <div class="brand">NSW COVID-19 Cases Dashboard</div>
        <div class="nav active">Cases Summaries</div>
        <div class="nav epi">LHD Epicurves</div>
        <div class="nav group">Cases by Age Group</div>
        <div class="nav">Data Source</div>
      </header>
      <div class="body">
        <aside class="side">
          <h2>Overview</h2>
          <p>This page displays the number<br />of COVID-19 cases from the<br />last reported day (normally up<br />to 4pm of the previous day),<br />cases this week, last week and<br />the total cases in all New<br />South Wales.</p>
          <p>It also features cumulative<br />cases mapped to locations by<br />Local Health District (LHD) and<br />Local Government Area (LGA).<br />Last reported day cases and<br />total or cumulative cases are<br />also displayed when hovering<br />over a specific location. Zoom<br />in to view smaller metropolitan<br />LHDs and Sydney LGAs.</p>
          <p>A Summary Table is provided<br />to display COVID-19 case<br />numbers for each LHD and<br />LGA, arranged based on which<br />area recorded the highest<br />cases on the last reported day.</p>
          <div class="select">Select Summary Table by:</div>
          <label class="opt"><input type="radio" name="by" checked /><span>Local Health District(LHD)</span></label>
          <label class="opt"><input type="radio" name="by" /><span>Local Government Area<br />(LGA)</span></label>
        </aside>
        <main class="main">
          <div class="boxes">
            <value-box value="189" caption="Cases on last reporting day: 2023-10-19"></value-box>
            <value-box value="1,517" caption="Cases this week: 2023-10-13 to 2023-10-19"></value-box>
            <value-box value="1,399" caption="Cases last week: 2023-10-06 to 2023-10-12"></value-box>
            <value-box value="3,894,044" caption="Cases since 2020-01-25"></value-box>
          </div>
          <div class="panels">
            <section class="card">
              <div class="head">Local COVID-19 transmission in New South Wales</div>
              <div class="map-pad"><nsw-map></nsw-map></div>
            </section>
            <section class="card">
              <div class="head">Cases Summary Table</div>
              <div class="table">
                <div class="row header"><span></span><span class="name">LHD</span><span>Reporting<br />Day</span><span>Reporting<br />Week</span><span>Total<br />Cases</span></div>
                ${rows.map(([name, day, week, total], i) => html`<div class="row"><span>${i + 1}</span><span class="name">${name}</span><span class=${day === "NA" ? "na" : ""}>${day}</span><span>${week}</span><span>${total}</span></div>`)}
              </div>
            </section>
          </div>
        </main>
      </div>
    `;
  }
}
